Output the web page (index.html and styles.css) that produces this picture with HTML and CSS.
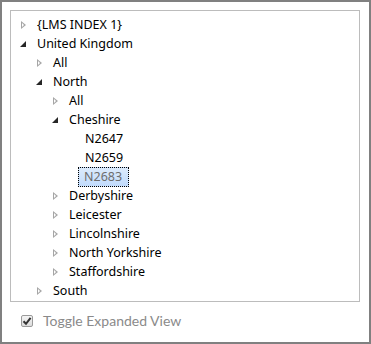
FILE: index.html
```html
<!DOCTYPE html>
<html lang="en">
<head>
  <meta charset="UTF-8" />
  <title>Location Tree</title>
  <link rel="stylesheet" href="styles.css">
</head>
<body>
  <div id="panel">
    <ul class="tree">
      <li class="node lvl0"><span class="tog closed"></span><span class="label">{LMS INDEX 1}</span></li>
      <li class="node lvl0"><span class="tog open"></span><span class="label">United Kingdom</span></li>
      <li class="node lvl1"><span class="tog closed"></span><span class="label">All</span></li>
      <li class="node lvl1"><span class="tog open"></span><span class="label">North</span></li>
      <li class="node lvl2"><span class="tog closed"></span><span class="label">All</span></li>
      <li class="node lvl2"><span class="tog open"></span><span class="label">Cheshire</span></li>
      <li class="node lvl3"><span class="tog"></span><span class="label">N2647</span></li>
      <li class="node lvl3"><span class="tog"></span><span class="label">N2659</span></li>
      <li class="node lvl3"><span class="tog"></span><span class="label selected">N2683</span></li>
      <li class="node lvl2"><span class="tog closed"></span><span class="label">Derbyshire</span></li>
      <li class="node lvl2"><span class="tog closed"></span><span class="label">Leicester</span></li>
      <li class="node lvl2"><span class="tog closed"></span><span class="label">Lincolnshire</span></li>
      <li class="node lvl2"><span class="tog closed"></span><span class="label">North Yorkshire</span></li>
      <li class="node lvl2"><span class="tog closed"></span><span class="label">Staffordshire</span></li>
      <li class="node lvl1"><span class="tog closed"></span><span class="label">South</span></li>
    </ul>
    <label class="toggle">
      <span class="check">
        <svg width="10" height="10" viewBox="0 0 10 10"><path d="M1.5 5.2 L4 7.8 L8.6 1.8" fill="none" stroke="#333" stroke-width="2"/></svg>
      </span>
      Toggle Expanded View
    </label>
  </div>
</body>
</html>
```

FILE: styles.css
```css
html, body {
  margin: 0;
  padding: 0;
  background: #fff;
}
#panel {
  width: 371px;
  height: 344px;
  box-sizing: border-box;
  border: 2px solid #808080;
  padding: 8px 9px 0 8px;
  font-family: "Noto Sans", "DejaVu Sans", sans-serif;
}
.tree {
  list-style: none;
  margin: 0;
  padding: 4px 0 2px 0;
  height: 292px;
  box-sizing: border-box;
  border: 1px solid #bcbcbc;
}
.node {
  display: flex;
  align-items: center;
  height: 19px;
  font-size: 12.5px;
  color: #000;
}
.lvl0 { padding-left: 8px; }
.lvl1 { padding-left: 24px; }
.lvl2 { padding-left: 40px; }
.lvl3 { padding-left: 56px; }
.tog {
  width: 18px;
  height: 19px;
  position: relative;
  flex: none;
}
.tog.closed::before {
  content: "";
  position: absolute;
  left: 2px;
  top: 6px;
  border-left: 5px solid #a6a6a6;
  border-top: 4px solid transparent;
  border-bottom: 4px solid transparent;
}
.tog.closed::after {
  content: "";
  position: absolute;
  left: 3px;
  top: 8px;
  border-left: 2px solid #fff;
  border-top: 2px solid transparent;
  border-bottom: 2px solid transparent;
}
.tog.open::before {
  content: "";
  position: absolute;
  left: 1px;
  top: 7px;
  border-right: 6px solid #262626;
  border-top: 6px solid transparent;
}
.label {
  padding: 0 4px 0 1px;
  line-height: 18px;
  border: 1px solid transparent;
  margin-left: -2px;
}
.label.selected {
  margin-left: -7px;
  padding: 0 6px 0 5px;
  border: 1px dotted #000;
  background: linear-gradient(#dcebfc, #c1dbfc);
  color: #6d6d6d;
}
.toggle {
  display: flex;
  align-items: center;
  margin: 10px 0 0 11px;
  font-family: "Lato", "Noto Sans", sans-serif;
  font-size: 14px;
  color: #8a8a8a;
}
.check {
  width: 10px;
  height: 10px;
  border: 1px solid #9a9a9a;
  border-radius: 2px;
  background: linear-gradient(#f4f4f4, #dcdcdc);
  margin-right: 10px;
  display: flex;
  align-items: center;
  justify-content: center;
}
```
